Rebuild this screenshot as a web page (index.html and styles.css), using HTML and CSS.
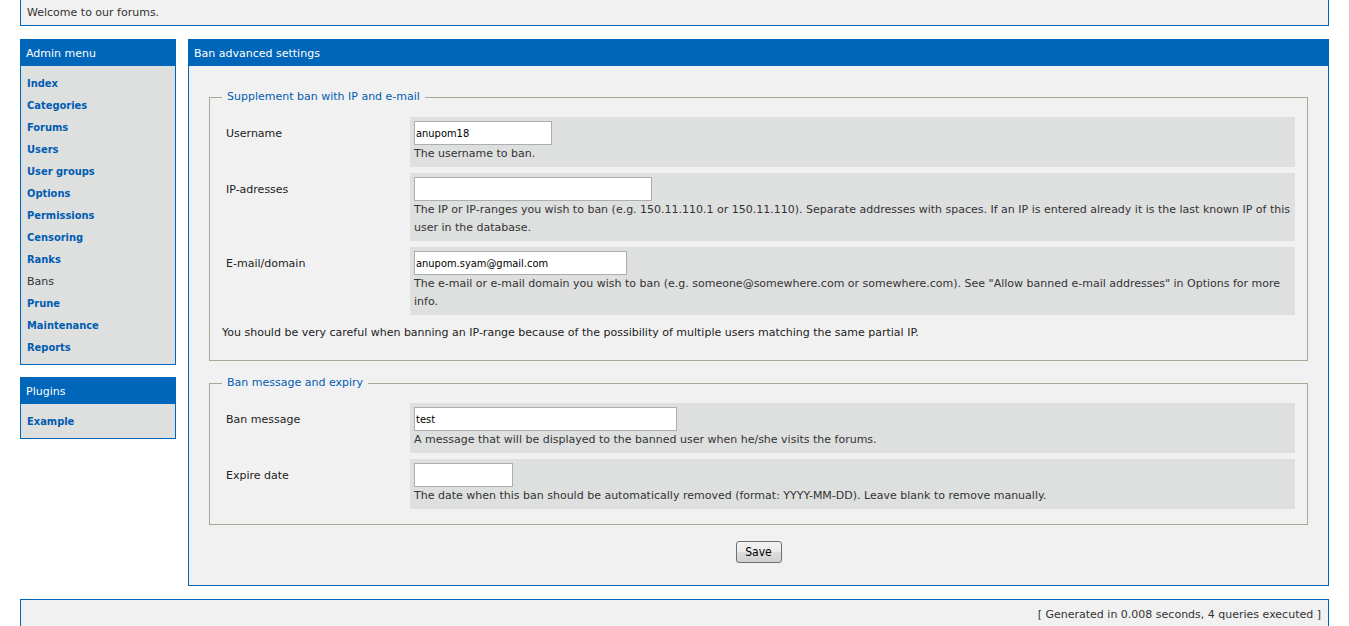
FILE: index.html
```html
<!DOCTYPE html>
<html lang="en">
<head>
<meta charset="utf-8">
<title>Admin - Bans</title>
<link rel="stylesheet" href="styles.css">
</head>
<body>
<div class="wrap">
  <div class="announce">Welcome to our forums.</div>

  <div class="layout">
    <aside class="side">
      <div class="menu">
        <h2 class="box-head">Admin menu</h2>
        <ul class="menu-list">
          <li><a href="#">Index</a></li>
          <li><a href="#">Categories</a></li>
          <li><a href="#">Forums</a></li>
          <li><a href="#">Users</a></li>
          <li><a href="#">User groups</a></li>
          <li><a href="#">Options</a></li>
          <li><a href="#">Permissions</a></li>
          <li><a href="#">Censoring</a></li>
          <li><a href="#">Ranks</a></li>
          <li class="current">Bans</li>
          <li><a href="#">Prune</a></li>
          <li><a href="#">Maintenance</a></li>
          <li><a href="#">Reports</a></li>
        </ul>
      </div>
      <div class="menu plugins">
        <h2 class="box-head">Plugins</h2>
        <ul class="menu-list">
          <li><a href="#">Example</a></li>
        </ul>
      </div>
    </aside>

    <main class="panel">
      <h2 class="box-head">Ban advanced settings</h2>
      <div class="panel-body">
        <form class="ban-form">
          <fieldset class="fs">
            <legend>Supplement ban with IP and e-mail</legend>
            <div class="rows">
              <div class="row">
                <div class="label">Username</div>
                <div class="field">
                  <input class="txt w-user" type="text" value="anupom18">
                  <div class="desc">The username to ban.</div>
                </div>
              </div>
              <div class="row">
                <div class="label">IP-adresses</div>
                <div class="field">
                  <input class="txt w-ip" type="text" value="">
                  <div class="desc">The IP or IP-ranges you wish to ban (e.g. 150.11.110.1 or 150.11.110). Separate addresses with spaces. If an IP is entered already it is the last known IP of this user in the database.</div>
                </div>
              </div>
              <div class="row">
                <div class="label">E-mail/domain</div>
                <div class="field">
                  <input class="txt w-mail" type="text" value="anupom.syam@gmail.com">
                  <div class="desc">The e-mail or e-mail domain you wish to ban (e.g. someone@somewhere.com or somewhere.com). See "Allow banned e-mail addresses" in Options for more info.</div>
                </div>
              </div>
            </div>
            <p class="warn">You should be very careful when banning an IP-range because of the possibility of multiple users matching the same partial IP.</p>
          </fieldset>

          <fieldset class="fs fs2">
            <legend>Ban message and expiry</legend>
            <div class="rows">
              <div class="row">
                <div class="label">Ban message</div>
                <div class="field">
                  <input class="txt w-msg" type="text" value="test">
                  <div class="desc">A message that will be displayed to the banned user when he/she visits the forums.</div>
                </div>
              </div>
              <div class="row">
                <div class="label">Expire date</div>
                <div class="field">
                  <input class="txt w-date" type="text" value="">
                  <div class="desc">The date when this ban should be automatically removed (format: YYYY-MM-DD). Leave blank to remove manually.</div>
                </div>
              </div>
            </div>
          </fieldset>

          <div class="actions"><button type="button" class="btn">Save</button></div>
        </form>
      </div>
    </main>
  </div>

  <footer class="foot">[ Generated in 0.008 seconds, 4 queries executed ]</footer>
</div>
</body>
</html>
```
FILE: styles.css
```css
html, body {
  margin: 0;
  padding: 0;
  background: #fff;
}
body {
  font-family: "DejaVu Sans", sans-serif;
  font-size: 11px;
  color: #333;
}
.wrap {
  padding: 0 20px;
}
a {
  color: #005cb1;
  text-decoration: none;
}

.announce {
  border: 1px solid #0066b9;
  border-top: none;
  background: #f1f1f1;
  height: 26px;
  box-sizing: border-box;
  padding: 6px 6px 0;
  line-height: 14px;
}

.layout {
  display: flex;
  align-items: flex-start;
  gap: 12px;
  margin-top: 13px;
}

.side {
  width: 156px;
  flex: none;
  display: flex;
  flex-direction: column;
  gap: 12px;
}

.box-head {
  margin: 0;
  background: #0066b9;
  color: #fff;
  font-size: 11px;
  font-weight: normal;
  height: 27px;
  box-sizing: border-box;
  line-height: 25px;
  padding: 2px 6px 0;
}

.menu-list {
  list-style: none;
  margin: 0;
  padding: 7px 6px 5px;
  background: #dedfdf;
  border: 1px solid #0066b9;
  border-top: none;
}
.menu-list li {
  line-height: 22px;
  font-family: "DejaVu Sans Condensed", "DejaVu Sans", sans-serif;
  font-weight: bold;
}
.menu-list li.current {
  color: #333;
  font-weight: normal;
  font-family: "DejaVu Sans", sans-serif;
}

.panel {
  flex: 1;
  min-width: 0;
}
.panel-body {
  background: #f1f1f1;
  border: 1px solid #0066b9;
  border-top: none;
  padding: 24px 20px 22px;
}

.fs {
  margin: 0;
  border: 1px solid #aca899;
  padding: 13px 12px 18px 16px;
  min-width: 0;
}
.fs legend {
  color: #005cb1;
  padding: 0 5px;
  margin-left: -4px;
  line-height: 14px;
}
.fs2 {
  margin-top: 15px;
  padding-bottom: 15px;
}

.rows {
  display: flex;
  flex-direction: column;
  gap: 6px;
}
.row {
  display: grid;
  grid-template-columns: 184px 1fr;
}
.label {
  padding-top: 10px;
  line-height: 14px;
  color: #222;
}
.field {
  background: #dedfdf;
  padding: 4px;
}
.txt {
  display: block;
  box-sizing: border-box;
  height: 24px;
  margin: 0;
  border: 1px solid #abadb3;
  background: #fff;
  padding: 2px 1px;
  font-family: "DejaVu Sans Condensed", "DejaVu Sans", sans-serif;
  font-size: 11px;
  color: #000;
}
.w-user { width: 138px; }
.w-ip { width: 238px; }
.w-mail { width: 213px; }
.w-msg { width: 263px; }
.w-date { width: 99px; }
.desc {
  line-height: 18px;
}

.warn {
  margin: 9px 0 0 -4px;
  line-height: 18px;
  color: #222;
}

.actions {
  display: flex;
  justify-content: center;
  margin-top: 16px;
}
.btn {
  width: 46px;
  height: 22px;
  padding: 0;
  border: 1px solid #707070;
  border-radius: 3px;
  background: linear-gradient(#f2f2f2 0%, #ebebeb 50%, #dddddd 51%, #cfcfcf 100%);
  font-family: "DejaVu Sans Condensed", "DejaVu Sans", sans-serif;
  font-size: 12px;
  color: #000;
}

.foot {
  margin-top: 13px;
  border: 1px solid #0066b9;
  background: #f1f1f1;
  text-align: right;
  padding: 8px 7px 6px;
  line-height: 14px;
  height: 40px;
}
```
